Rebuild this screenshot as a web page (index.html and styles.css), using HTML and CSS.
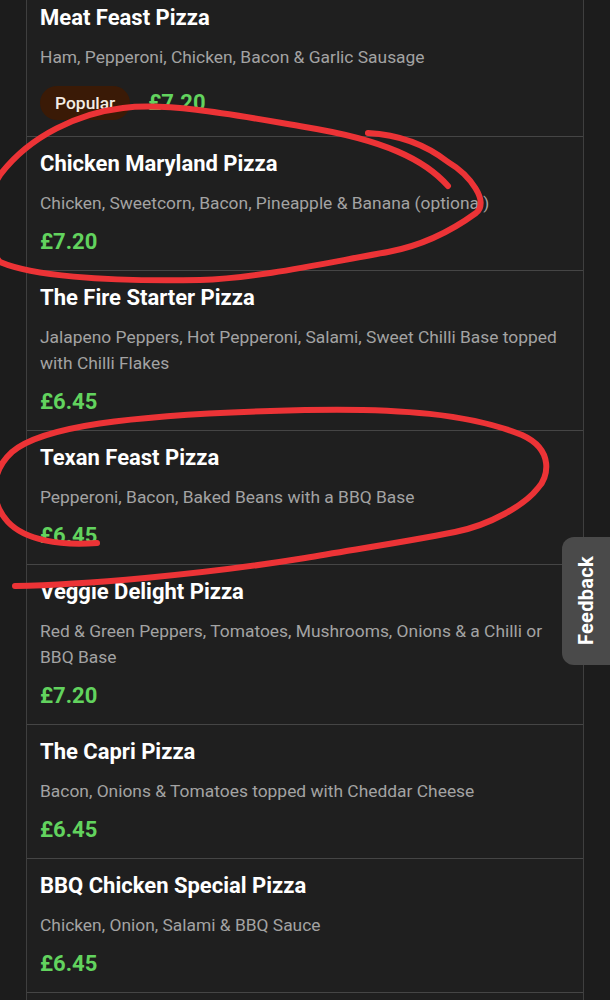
FILE: index.html
```html
<!DOCTYPE html>
<html lang="en">
<head>
<meta charset="utf-8">
<title>Pizza Menu</title>
<link rel="stylesheet" href="styles.css">
</head>
<body>
<div class="page">
  <div class="menu">
    <div class="item first">
      <div class="title">Meat Feast Pizza</div>
      <div class="desc">Ham, Pepperoni, Chicken, Bacon &amp; Garlic Sausage</div>
      <div class="price-row badge-row">
        <span class="badge">Popular</span>
        <span class="price">£7.20</span>
      </div>
    </div>
    <div class="item">
      <div class="title">Chicken Maryland Pizza</div>
      <div class="desc">Chicken, Sweetcorn, Bacon, Pineapple &amp; Banana (optional)</div>
      <div class="price-row"><span class="price">£7.20</span></div>
    </div>
    <div class="item">
      <div class="title">The Fire Starter Pizza</div>
      <div class="desc">Jalapeno Peppers, Hot Pepperoni, Salami, Sweet Chilli Base topped with Chilli Flakes</div>
      <div class="price-row"><span class="price">£6.45</span></div>
    </div>
    <div class="item">
      <div class="title">Texan Feast Pizza</div>
      <div class="desc">Pepperoni, Bacon, Baked Beans with a BBQ Base</div>
      <div class="price-row"><span class="price">£6.45</span></div>
    </div>
    <div class="item">
      <div class="title">Veggie Delight Pizza</div>
      <div class="desc">Red &amp; Green Peppers, Tomatoes, Mushrooms, Onions &amp; a Chilli or BBQ Base</div>
      <div class="price-row"><span class="price">£7.20</span></div>
    </div>
    <div class="item">
      <div class="title">The Capri Pizza</div>
      <div class="desc">Bacon, Onions &amp; Tomatoes topped with Cheddar Cheese</div>
      <div class="price-row"><span class="price">£6.45</span></div>
    </div>
    <div class="item">
      <div class="title">BBQ Chicken Special Pizza</div>
      <div class="desc">Chicken, Onion, Salami &amp; BBQ Sauce</div>
      <div class="price-row"><span class="price">£6.45</span></div>
    </div>
    <div class="item tail"></div>
  </div>

  <button class="feedback" type="button"><span>Feedback</span></button>

  <svg class="scribble" width="610" height="1000" viewBox="0 0 610 1000" aria-hidden="true">
    <path d="M448,186 C425,160 385,140 305,127 C240,116 170,102 123,108 C80,113 30,135 0,175 C-20,205 -15,245 0,262 C30,275 100,282 200,280 C260,278 330,262 388,252 C420,246 450,232 476,213 C490,202 470,175 448,162 C430,148 405,135 368,133"/>
    <path d="M97,543 C60,546 25,540 8,522 C-12,500 -8,470 12,452 C40,428 120,414 305,410 C400,408 470,414 522,435 C555,450 548,478 538,488 C525,505 490,525 455,532 C400,543 350,550 305,558 C200,575 80,585 15,586"/>
  </svg>
</div>
</body>
</html>
```
FILE: styles.css
```css
html, body {
  margin: 0;
  padding: 0;
  background: #1c1c1c;
  height: 100%;
  overflow: hidden;
}

body {
  font-family: Roboto, "Liberation Sans", Arial, sans-serif;
}

.page {
  position: relative;
  width: 610px;
  height: 1000px;
  overflow: hidden;
}

.menu {
  margin-left: 26px;
  width: 556px;
  margin-top: -9px;
  background: #1f1f1f;
  border-left: 1px solid #3f3f3f;
  border-right: 1px solid #3f3f3f;
  display: flex;
  flex-direction: column;
}

.item {
  display: flex;
  flex-direction: column;
  gap: 14px;
  padding: 15px 13px 16px 13px;
  border-bottom: 1px solid #454545;
}

.item.tail {
  height: 40px;
  padding: 0;
  border-bottom: none;
}

.title {
  color: #ffffff;
  font-size: 22px;
  font-weight: 700;
  line-height: 24px;
}

.desc {
  color: #a3a3a3;
  font-size: 17.4px;
  line-height: 26px;
}

.price-row {
  display: flex;
  align-items: center;
  gap: 18px;
  height: 24px;
}

.badge-row {
  height: 34px;
  margin-top: 2px;
}

.badge {
  display: inline-flex;
  align-items: center;
  height: 34px;
  padding: 0 15px;
  border-radius: 17px;
  background: #3a1a06;
  color: #f3ece4;
  font-size: 17.4px;
  font-weight: 500;
}

.price {
  color: #62d35e;
  font-size: 22px;
  font-weight: 700;
  line-height: 24px;
}

.feedback {
  position: absolute;
  right: 0;
  top: 537px;
  width: 48px;
  height: 128px;
  border: none;
  padding: 0;
  margin: 0;
  background: #4a4a4a;
  border-radius: 12px 0 0 12px;
  display: flex;
  align-items: center;
  justify-content: center;
  font-family: Roboto, "Liberation Sans", Arial, sans-serif;
}

.feedback span {
  writing-mode: vertical-rl;
  transform: rotate(180deg);
  color: #ffffff;
  font-size: 20px;
  font-weight: 700;
  letter-spacing: 0.3px;
}

.scribble {
  position: absolute;
  left: 0;
  top: 0;
  pointer-events: none;
  overflow: visible;
}

.scribble path {
  fill: none;
  stroke: #ec3336;
  stroke-width: 6;
  stroke-linecap: round;
  stroke-linejoin: round;
}
```
